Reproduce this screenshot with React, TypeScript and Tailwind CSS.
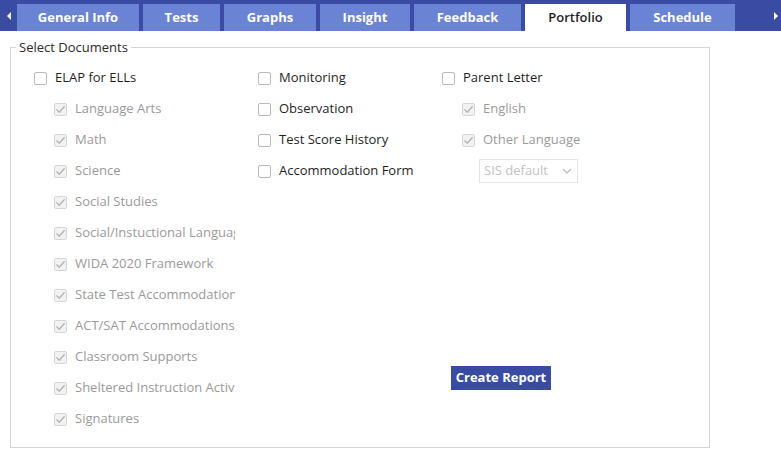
import React from "react";

const tabs = [
  { label: "General Info", w: "w-[122px]" },
  { label: "Tests", w: "w-[77px]" },
  { label: "Graphs", w: "w-[92px]" },
  { label: "Insight", w: "w-[90px]" },
  { label: "Feedback", w: "w-[107px]" },
  { label: "Portfolio", w: "w-[101px]", active: true },
  { label: "Schedule", w: "w-[105px]" },
];

const elapItems = [
  "Language Arts",
  "Math",
  "Science",
  "Social Studies",
  "Social/Instuctional Language",
  "WIDA 2020 Framework",
  "State Test Accommodations",
  "ACT/SAT Accommodations",
  "Classroom Supports",
  "Sheltered Instruction Activities",
  "Signatures",
];

function Box({ disabled }: { disabled?: boolean }) {
  if (disabled) {
    return (
      <span className="flex h-[13px] w-[13px] shrink-0 items-center justify-center rounded-[2px] border border-[#d6d6d6] bg-[#f2f2f2]">
        <svg width="11" height="11" viewBox="0 0 11 11" fill="none">
          <path d="M1.5 5.5 L4.3 8.3 L9.6 2.2" stroke="#b5b5b5" strokeWidth="1.4" />
        </svg>
      </span>
    );
  }
  return <span className="h-[13px] w-[13px] shrink-0 rounded-[2px] border border-[#b9b9b9] bg-white" />;
}

function Row({ label, sub }: { label: string; sub?: boolean }) {
  return (
    <div className={`flex h-[31px] items-center gap-2 overflow-hidden whitespace-nowrap ${sub ? "pl-5" : ""}`}>
      <Box disabled={sub} />
      <span className={sub ? "text-[#9a9a9a]" : "text-[#1f1f1f]"}>{label}</span>
    </div>
  );
}

export default function App() {
  return (
    <div className="min-h-[456px] bg-white font-['Open_Sans',sans-serif] text-[13px] font-medium">
      <div className="flex h-[31px] bg-[#3a4ba3] pt-1">
        <div className="flex w-[17px] items-center justify-center pb-1">
          <span className="h-0 w-0 border-y-[4px] border-r-[4px] border-y-transparent border-r-white" />
        </div>
        <div className="flex gap-1">
          {tabs.map((t) => (
            <div
              key={t.label}
              className={`${t.w} flex items-center justify-center ${
                t.active ? "bg-white text-[#1f1f1f] font-semibold" : "bg-[#6b83d5] text-white font-bold"
              }`}
            >
              {t.label}
            </div>
          ))}
        </div>
        <div className="flex flex-1 items-center justify-end pr-[3px] pb-1">
          <span className="h-0 w-0 border-y-[4px] border-l-[4px] border-y-transparent border-l-white" />
        </div>
      </div>

      <fieldset className="mt-[7px] ml-[10px] h-[410px] w-[700px] border border-[#d4d4d4] pt-[5px]">
        <legend className="ml-[5px] px-[3px] text-[#2a2a2a]">Select Documents</legend>
        <div className="flex pl-[23px]">
          <div className="w-[201px]">
            <Row label="ELAP for ELLs" />
            {elapItems.map((l) => (
              <Row key={l} label={l} sub />
            ))}
          </div>
          <div className="ml-[23px] w-[184px]">
            <Row label="Monitoring" />
            <Row label="Observation" />
            <Row label="Test Score History" />
            <Row label="Accommodation Form" />
          </div>
          <div className="flex-1">
            <Row label="Parent Letter" />
            <Row label="English" sub />
            <Row label="Other Language" sub />
            <div className="flex h-[31px] items-center pl-[37px]">
              <div className="flex h-[24px] w-[99px] items-center justify-between border border-[#e6e6e6] pl-[4px] pr-[5px] text-[#c2c2c2]">
                <span>SIS default</span>
                <svg width="10" height="6" viewBox="0 0 10 6" fill="none">
                  <path d="M1 1 L5 5 L9 1" stroke="#c2c2c2" strokeWidth="1.5" />
                </svg>
              </div>
            </div>
            <button className="ml-[9px] mt-[179px] h-[24px] w-[100px] bg-[#3a4ba3] font-bold text-white">
              Create Report
            </button>
          </div>
        </div>
      </fieldset>
    </div>
  );
}
